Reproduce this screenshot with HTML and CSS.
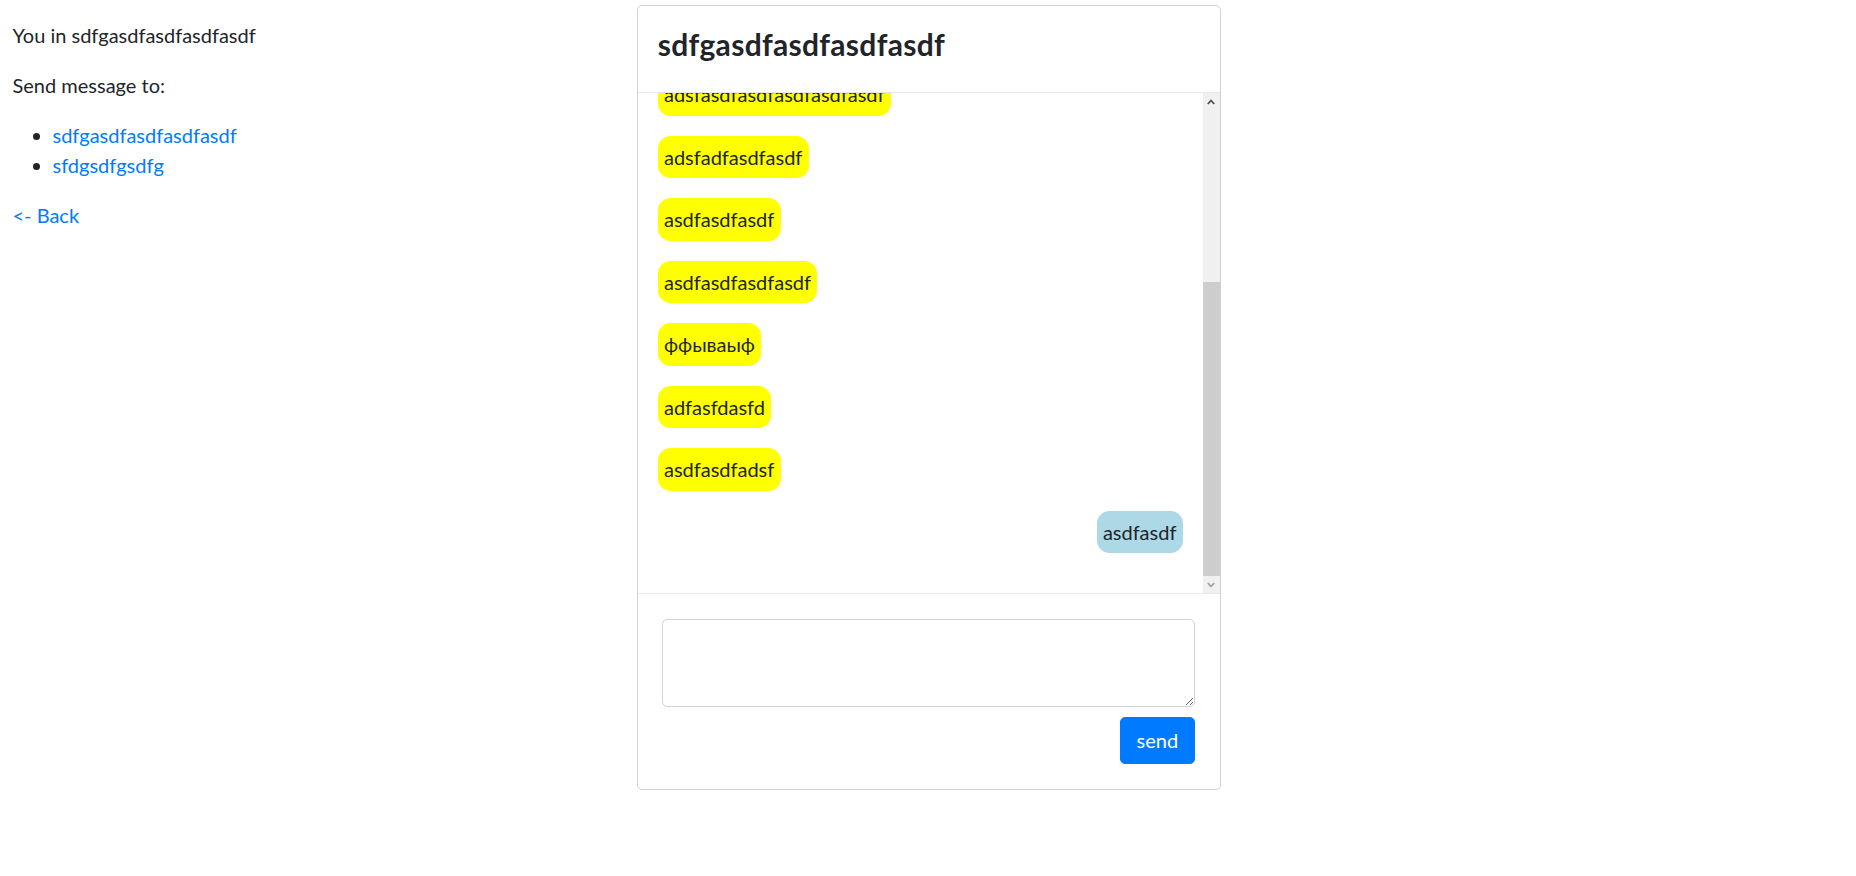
FILE: index.html
```html
<!DOCTYPE html>
<html lang="en">
<head>
<meta charset="utf-8">
<title>Chat</title>
<link rel="stylesheet" href="styles.css">
</head>
<body>
<div class="page">
  <aside class="sidebar">
    <p>You in sdfgasdfasdfasdfasdf</p>
    <p>Send message to:</p>
    <ul class="rooms">
      <li><a href="#">sdfgasdfasdfasdfasdf</a></li>
      <li><a href="#">sfdgsdfgsdfg</a></li>
    </ul>
    <a href="#" class="back">&lt;- Back</a>
  </aside>
  <section class="card">
    <header class="card-header">
      <h4 class="title">sdfgasdfasdfasdfasdf</h4>
    </header>
    <div class="messages">
      <div class="messages-view">
        <div class="messages-inner">
          <p class="msg">adsfasdfasdfasdfasdfasdf</p>
          <p class="msg">adsfadfasdfasdf</p>
          <p class="msg">asdfasdfasdf</p>
          <p class="msg">asdfasdfasdfasdf</p>
          <p class="msg">ффываыф</p>
          <p class="msg">adfasfdasfd</p>
          <p class="msg">asdfasdfadsf</p>
          <p class="msg mine">asdfasdf</p>
        </div>
      </div>
      <div class="scrollbar" aria-hidden="true">
        <div class="sb-btn">
          <svg width="8" height="6" viewBox="0 0 8 6"><path d="M0.8 5 L4 1.5 L7.2 5" fill="none" stroke="#505050" stroke-width="1.8"/></svg>
        </div>
        <div class="sb-track"><div class="sb-thumb"></div></div>
        <div class="sb-btn">
          <svg width="8" height="6" viewBox="0 0 8 6"><path d="M0.8 1 L4 4.5 L7.2 1" fill="none" stroke="#a3a3a3" stroke-width="1.8"/></svg>
        </div>
      </div>
    </div>
    <form class="composer" onsubmit="return false">
      <textarea class="input"></textarea>
      <button type="submit" class="send">send</button>
    </form>
  </section>
</div>
</body>
</html>
```
FILE: styles.css
```css
html, body {
  margin: 0;
  background: #fff;
}
body {
  font-family: "Lato", "Noto Sans", sans-serif;
  font-size: 20px;
  line-height: 30px;
  color: #212529;
}
a {
  color: #007bff;
  text-decoration: none;
}
.page {
  display: flex;
  align-items: flex-start;
  padding: 5px 12.5px;
}
.sidebar {
  flex: 0 0 624.2px;
  padding-top: 15px;
}
.sidebar p {
  margin: 0 0 20px;
}
.rooms {
  margin: 0 0 20px;
  padding-left: 40px;
}
.back {
  display: inline-block;
}
.card {
  flex: 0 0 584px;
  box-sizing: border-box;
  border: 1px solid #d2d2d2;
  border-radius: 5px;
  background: #fff;
  overflow: hidden;
}
.card-header {
  padding: 20px;
  border-bottom: 1px solid #e8e8e8;
}
.title {
  margin: 0 0 10px;
  font-size: 30px;
  line-height: 36px;
  font-weight: 700;
  letter-spacing: 0.3px;
  color: #212529;
}
.messages {
  display: flex;
  height: 500px;
  border-bottom: 1px solid #e8e8e8;
}
.messages-view {
  flex: 1;
  overflow: hidden;
  display: flex;
  flex-direction: column-reverse;
}
.messages-inner {
  display: flex;
  flex-direction: column;
  align-items: flex-start;
  padding: 20px;
}
.msg {
  margin: 0 0 20px;
  padding: 6.25px;
  border-radius: 12.5px;
  background: #ffff00;
  white-space: nowrap;
}
.msg.mine {
  align-self: flex-end;
  background: #add8e6;
}
.scrollbar {
  flex: 0 0 17px;
  display: flex;
  flex-direction: column;
  background: #f0f0f0;
}
.sb-btn {
  flex: 0 0 17px;
  display: flex;
  align-items: center;
  justify-content: center;
}
.sb-btn svg {
  display: block;
}
.sb-track {
  flex: 1;
  display: flex;
  flex-direction: column;
  justify-content: flex-end;
}
.sb-thumb {
  height: 294px;
  background: #cdcdcd;
}
.composer {
  display: flex;
  flex-direction: column;
  align-items: flex-end;
  padding: 25px 24.5px;
  margin: 0;
}
.input {
  display: block;
  box-sizing: border-box;
  width: 100%;
  height: 87.5px;
  margin: 0;
  padding: 7.5px 15px;
  border: 1px solid #ced4da;
  border-radius: 5px;
  font: inherit;
  color: #495057;
  resize: vertical;
}
.send {
  margin-top: 10px;
  padding: 7.5px 16px;
  border: 1px solid #007bff;
  border-radius: 5px;
  background: #007bff;
  color: #fff;
  font: inherit;
  line-height: 30px;
  cursor: pointer;
}
```
